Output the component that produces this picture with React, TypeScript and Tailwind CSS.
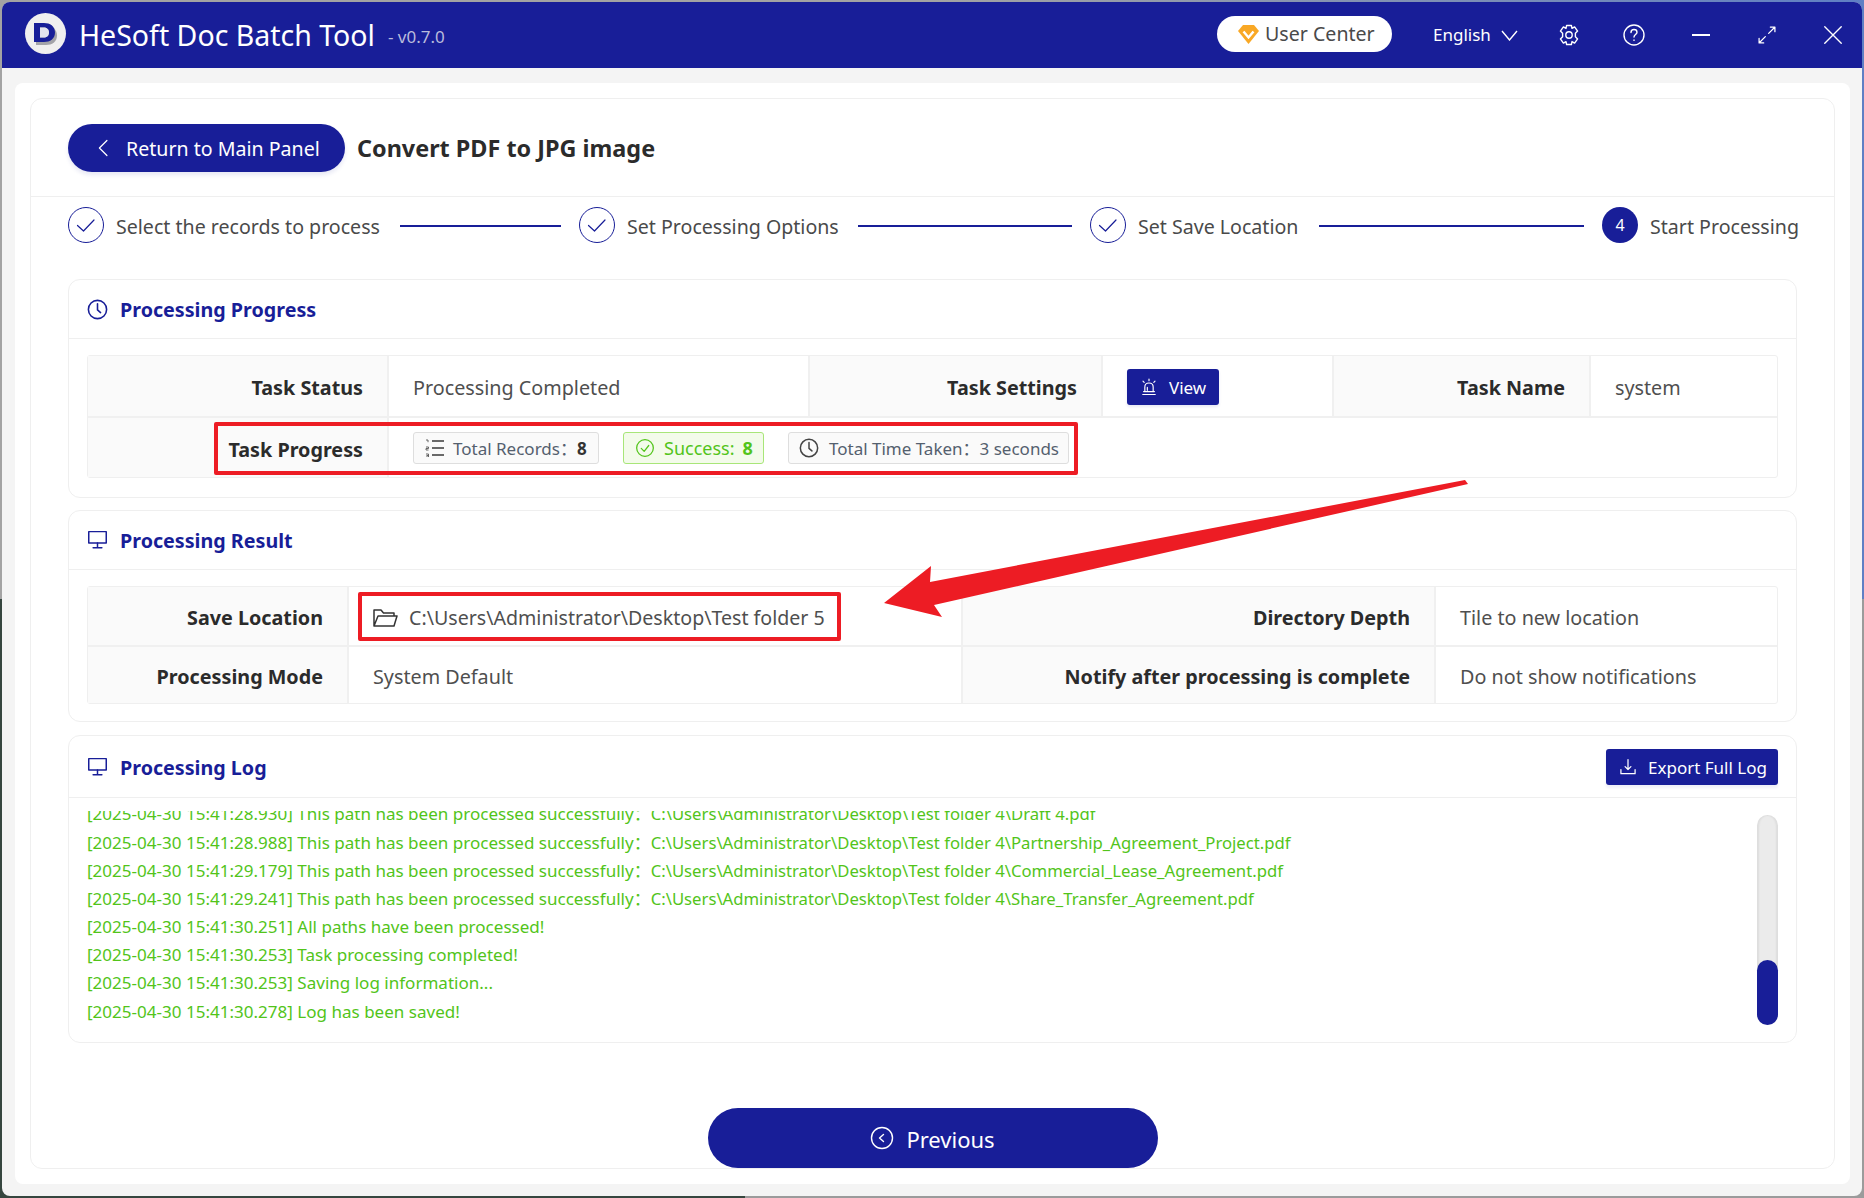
import React from "react";

function Stroke({ size, className, children, sw = 1.5 }: { size: number; className?: string; children: React.ReactNode; sw?: number }) {
  return (
    <svg width={size} height={size} viewBox="0 0 24 24" fill="none" stroke="currentColor" strokeWidth={sw} strokeLinecap="round" strokeLinejoin="round" className={className}>
      {children}
    </svg>
  );
}

const ClockIcon = ({ size = 20, className = "" }: { size?: number; className?: string }) => (
  <Stroke size={size} className={className} sw={1.8}>
    <circle cx="12" cy="12" r="10.4" />
    <path d="M12 5.5V12.5L15.5 15.5" />
  </Stroke>
);

const MonitorIcon = () => (
  <Stroke size={21} className="text-[#181e98] shrink-0" sw={1.7}>
    <path d="M2 3H22V16H2Z" />
    <path d="M12 16V21M7 21.5H17" />
  </Stroke>
);

function Step({ n, label, done, w }: { n: number; label: string; done: boolean; w: string }) {
  return (
    <div className="flex items-center shrink-0">
      {done ? (
        <div className="w-[36px] h-[36px] rounded-full border border-[#181e98] flex items-center justify-center text-[#181e98]">
          <Stroke size={24} sw={1.2}><path d="M3.5 12.5L9.5 18L20 7" /></Stroke>
        </div>
      ) : (
        <div className="w-[36px] h-[36px] rounded-full bg-[#181e98] flex items-center justify-center text-white text-[16px]">{n}</div>
      )}
      <span className={"ml-[12px] mt-[4px] text-[19.6px] text-[#4a4a4a] whitespace-nowrap " + w}>{label}</span>
    </div>
  );
}

const Line = ({ className }: { className: string }) => <div className={"h-[2px] mt-[2px] bg-[#181e98] shrink-0 " + className} />;

const Lbl = ({ className, children }: { className: string; children: React.ReactNode }) => (
  <div className={"shrink-0 bg-[#fafafa] flex items-center justify-end pr-[24px] pt-[4px] font-bold text-[19.75px] text-[#2b2b2b] border-r-2 border-[#f0f0f0] whitespace-nowrap " + className}>{children}</div>
);
const Val = ({ className, children }: { className: string; children: React.ReactNode }) => (
  <div className={"shrink-0 flex items-center pl-[24px] text-[19.75px] text-[#4f4f4f] " + className}>{children}</div>
);

function Tag({ className, children }: { className: string; children: React.ReactNode }) {
  return <div className={"h-[32px] rounded-[3px] border flex items-center shrink-0 whitespace-nowrap " + className}>{children}</div>;
}

function Card({ className, icon, title, right, children, headH }: { className: string; icon: React.ReactNode; title: string; right?: React.ReactNode; children: React.ReactNode; headH: string }) {
  return (
    <section className={"rounded-[12px] border border-[#efefef] flex flex-col " + className}>
      <header className={"flex items-center pl-[18px] pr-[18px] border-b border-[#efefef] shrink-0 " + headH}>
        {icon}
        <h2 className="ml-[12px] mt-[2px] text-[19.7px] font-bold text-[#181e98]">{title}</h2>
        {right}
      </header>
      {children}
    </section>
  );
}

const base = "C:\\Users\\Administrator\\Desktop\\Test folder 4\\";
const ok = "This path has been processed successfully\uff1a";
const logs: { head: string; path?: string }[] = [
  { head: `[2025-04-30 15:41:28.930] ${ok}`, path: base + "Draft 4.pdf" },
  { head: `[2025-04-30 15:41:28.988] ${ok}`, path: base + "Partnership_Agreement_Project.pdf" },
  { head: `[2025-04-30 15:41:29.179] ${ok}`, path: base + "Commercial_Lease_Agreement.pdf" },
  { head: `[2025-04-30 15:41:29.241] ${ok}`, path: base + "Share_Transfer_Agreement.pdf" },
  { head: "[2025-04-30 15:41:30.251] All paths have been processed!" },
  { head: "[2025-04-30 15:41:30.253] Task processing completed!" },
  { head: "[2025-04-30 15:41:30.253] Saving log information..." },
  { head: "[2025-04-30 15:41:30.278] Log has been saved!" },
];

export default function App() {
  return (
    <div className="relative w-[1864px] h-[1198px] overflow-hidden p-[2px] [background:linear-gradient(90deg,#a3a3a3_0,#a3a3a3_50%,#5f7fc4_100%)_top/100%_50%_no-repeat,linear-gradient(90deg,#36463f_745px,#9b9b9b_745px)] font-['Noto_Sans','Open_Sans','Noto_Sans_CJK_SC',sans-serif]">
      <div className="w-[1860px] h-[1194px] rounded-[8px] overflow-hidden bg-[#f4f4f4] flex flex-col">
        {/* title bar */}
        <div className="h-[66px] bg-[#181e98] flex items-center shrink-0 text-white">
          <div className="ml-[23px] mb-[3px] w-[41px] h-[41px] rounded-full bg-[#f0efef] flex items-center justify-center shrink-0">
            <svg width="25" height="23" viewBox="0 0 25 23">
              <path fillRule="evenodd" fill="#a3a3a8" d="M3 4H13C19 4 24 7 24 13.5S19 23 13 23H3Z" />
              <path fillRule="evenodd" fill="#181e98" d="M1 1H11C17 1 22 4 22 10.5S17 20 11 20H1ZM7 5.5V15.5H10.5C14 15.5 16 13.5 16 10.5S14 5.5 10.5 5.5Z" />
              <path fill="#e4e4ee" d="M7 5.5V15.5H10.5C14 15.5 16 13.5 16 10.5S14 5.5 10.5 5.5Z" />
            </svg>
          </div>
          <span className="ml-[13px] text-[28.5px] whitespace-nowrap">HeSoft Doc Batch Tool</span>
          <span className="ml-[13px] text-[17px] mt-[3px] text-[#b9bbdc] whitespace-nowrap">- v0.7.0</span>
          <div className="ml-auto w-[175px] h-[36px] mb-[2px] rounded-full bg-white flex items-center pl-[21px] text-[#4a4a4a] text-[19.6px] shrink-0">
            <svg width="21" height="19" viewBox="0 0 21 19" className="shrink-0"><path fill="#f9a825" d="M5 0H16L21 6L10.5 19L0 6Z" /><path fill="none" stroke="#fff" strokeWidth="2.4" d="M5.5 6.5L10.5 12.5L15.5 6.5" /></svg>
            <span className="ml-[6px] whitespace-nowrap">User Center</span>
          </div>
          <span className="ml-[41px] w-[56px] text-[17px] whitespace-nowrap">English</span>
          <svg width="17" height="11" viewBox="0 0 17 11" className="ml-[12px] shrink-0" fill="none" stroke="currentColor" strokeWidth="1.4"><path d="M1 1L8.5 10L16 1" /></svg>
          <Stroke size={24} className="ml-[39px] shrink-0" sw={1.4}>
            <circle cx="12" cy="12" r="3.2" />
            <path d="M9.6 2.5H14.4L15 5.4L17.6 3.9L20.6 8.1L18.4 10.2V13.8L20.6 15.9L17.6 20.1L15 18.6L14.4 21.5H9.6L9 18.6L6.4 20.1L3.4 15.9L5.6 13.8V10.2L3.4 8.1L6.4 3.9L9 5.4Z" />
          </Stroke>
          <Stroke size={24} className="ml-[41px] shrink-0" sw={1.4}>
            <circle cx="12" cy="12" r="10" />
            <path d="M9 9.5C9 7.5 10.5 6.5 12 6.5C13.7 6.5 15 7.7 15 9.2C15 11.5 12 11.5 12 14" />
            <path d="M12 17V17.4" />
          </Stroke>
          <div className="ml-[46px] w-[18px] h-[2px] bg-white shrink-0" />
          <Stroke size={20} className="ml-[47px] shrink-0" sw={1.5}>
            <path d="M14 10L21 3M16 2.5H21.5V8M10 14L3 21M2.5 16V21.5H8" />
          </Stroke>
          <Stroke size={22} className="ml-[45px] mr-[18px] shrink-0" sw={1.5}>
            <path d="M3 3L21 21M21 3L3 21" />
          </Stroke>
        </div>
        {/* body */}
        <div className="flex-1 pl-[13px] pr-[12px] pt-[15px] pb-[12px] min-h-0">
          <div className="h-full bg-white rounded-[8px] p-[15px]">
            <div className="h-full rounded-[12px] border border-[#efefef] flex flex-col">
              <div className="h-[98px] border-b border-[#efefef] flex items-center pl-[37px] shrink-0">
                <div className="w-[277px] h-[48px] rounded-full bg-[#181e98] text-white flex items-center pl-[26px] text-[19.6px] shadow-[0_3px_4px_rgba(24,30,152,0.1)]">
                  <Stroke size={20} sw={1.5}><path d="M15.5 3L6.5 12L15.5 21" /></Stroke>
                  <span className="ml-[12px] mt-[2px] whitespace-nowrap">Return to Main Panel</span>
                </div>
                <h1 className="ml-[12px] mt-[2px] text-[23.4px] font-bold text-[#2b2b2b] whitespace-nowrap">Convert PDF to JPG image</h1>
              </div>
              <div className="flex items-center mt-[10px] pl-[37px] h-[36px] shrink-0">
                <Step n={1} label="Select the records to process" done w="w-[266px]" />
                <Line className="ml-[18px] w-[161px]" />
                <div className="ml-[18px]"><Step n={2} label="Set Processing Options" done w="w-[213px]" /></div>
                <Line className="ml-[18px] w-[214px]" />
                <div className="ml-[18px]"><Step n={3} label="Set Save Location" done w="w-[163px]" /></div>
                <Line className="ml-[18px] w-[265px]" />
                <div className="ml-[18px]"><Step n={4} label="Start Processing" done={false} w="w-[147px]" /></div>
              </div>

              <div className="mx-[37px] mt-[36px] flex flex-col flex-1 min-h-0">
                <Card className="h-[219px]" headH="h-[59px]" icon={<ClockIcon className="text-[#181e98] shrink-0" size={21} />} title="Processing Progress">
                  <div className="mx-[18px] mt-[16px] h-[123px] border border-[#efefef] rounded-[3px] flex flex-col">
                    <div className="h-[62px] flex border-b-2 border-[#f0f0f0]">
                      <Lbl className="w-[301px]">Task Status</Lbl>
                      <Val className="w-[421px] pt-[4px] border-r-2 border-[#f0f0f0]">Processing Completed</Val>
                      <Lbl className="w-[293px]">Task Settings</Lbl>
                      <Val className="w-[229px]">
                        <div className="w-[92px] h-[36px] mt-[2px] rounded-[3px] bg-[#181e98] text-white text-[17px] flex items-center pl-[12px] shadow-[0_2px_3px_rgba(24,30,152,0.1)]">
                          <Stroke size={20} sw={1.4}>
                            <path d="M7 17.5V12C7 9 9 7.2 12 7.2S17 9 17 12V17.5M4.5 21H19.5M5.5 17.5H18.5M10 16V12.5" />
                            <path d="M12 2.5V4.5M4.8 5L6.2 6.4M19.2 5L17.8 6.4" />
                          </Stroke>
                          <span className="ml-[10px] mt-[2px]">View</span>
                        </div>
                      </Val>
                      <div className="w-[2px] bg-[#f0f0f0] shrink-0" />
                      <Lbl className="w-[257px]">Task Name</Lbl>
                      <Val className="flex-1 pt-[4px]">system</Val>
                    </div>
                    <div className="flex-1 flex">
                      <Lbl className="w-[301px]">Task Progress</Lbl>
                      <div className="flex items-center pl-[24px] gap-[24px]">
                        <Tag className="w-[186px] bg-[#fafafa] border-[#dedede] text-[#54606e] pl-[11px] text-[17px]">
                          <svg width="19" height="18" viewBox="0 0 19 18" fill="none" className="shrink-0">
                            <path d="M7 2H19M7 9H19M7 16H19" stroke="#3a3a3a" strokeWidth="1.6" />
                            <path d="M1 1H3V3.2M1 8H3.5V9.5H1V11H3.5M1 15H3.5V18H1M1.5 16.5H3.5" stroke="#555" strokeWidth="0.9" />
                          </svg>
                          <span className="ml-[9px] mt-[2px]">Total Records{"\uff1a"}</span>
                          <b className="mt-[2px] text-[#333]">8</b>
                        </Tag>
                        <Tag className="w-[141px] bg-[#f3fbea] border-[#a8e678] text-[#52c41a] pl-[11px] text-[18px]">
                          <Stroke size={20} className="shrink-0" sw={1.5}><circle cx="12" cy="12" r="10" /><path d="M7.5 12.5L11 16L16.5 9" /></Stroke>
                          <span className="ml-[9px] mt-[2px]">Success:</span>
                          <b className="ml-[8px] mt-[2px]">8</b>
                        </Tag>
                        <Tag className="w-[281px] bg-[#fafafa] border-[#dedede] text-[#54606e] pl-[10px] text-[17px]">
                          <ClockIcon className="text-[#444] shrink-0" size={20} />
                          <span className="ml-[10px] mt-[2px]">Total Time Taken{"\uff1a"}</span>
                          <span className="mt-[2px]">3 seconds</span>
                        </Tag>
                      </div>
                    </div>
                  </div>
                </Card>

                <Card className="h-[213px] mt-[12px]" headH="h-[59px]" icon={<MonitorIcon />} title="Processing Result">
                  <div className="mx-[18px] mt-[16px] h-[118px] border border-[#efefef] rounded-[3px] flex flex-col">
                    <div className="h-[60px] flex border-b-2 border-[#f0f0f0]">
                      <Lbl className="w-[261px]">Save Location</Lbl>
                      <Val className="w-[614px] pt-[4px] border-r-2 border-[#f0f0f0]">
                        <svg width="25" height="18" viewBox="0 0 25 18" fill="none" stroke="#333" strokeWidth="1.5" strokeLinejoin="round" className="shrink-0">
                          <path d="M1 17V1H8L10.5 4H21V7M1 17H21L24 7H5L1 17Z" />
                        </svg>
                        <span className="ml-[11px] text-[19.6px] whitespace-nowrap">C:\Users\Administrator\Desktop\Test folder 5</span>
                      </Val>
                      <Lbl className="w-[473px]">Directory Depth</Lbl>
                      <Val className="flex-1 pt-[4px]">Tile to new location</Val>
                    </div>
                    <div className="flex-1 flex">
                      <Lbl className="w-[261px]">Processing Mode</Lbl>
                      <Val className="w-[614px] pt-[4px] border-r-2 border-[#f0f0f0]">System Default</Val>
                      <Lbl className="w-[473px]">Notify after processing is complete</Lbl>
                      <Val className="flex-1 pt-[4px]">Do not show notifications</Val>
                    </div>
                  </div>
                </Card>

                <Card
                  className="h-[308px] mt-[13px]"
                  headH="h-[62px]"
                  icon={<MonitorIcon />}
                  title="Processing Log"
                  right={
                    <div className="ml-auto w-[172px] h-[36px] rounded-[3px] bg-[#181e98] text-white text-[17px] flex items-center pl-[12px] shadow-[0_3px_3px_rgba(24,30,152,0.07)]">
                      <Stroke size={20} sw={1.5}><path d="M12 3V15M8.5 11.5L12 15L15.5 11.5M3.5 15V20H20.5V15" /></Stroke>
                      <span className="ml-[10px] mt-[2px] whitespace-nowrap">Export Full Log</span>
                    </div>
                  }
                >
                  <div className="flex flex-1 min-h-0 pl-[18px] pr-[18px]">
                    <div className="flex-1 min-w-0 mt-[13px] h-[216px] overflow-hidden">
                      <div className="-mt-[11px] text-[17.05px] leading-[28.17px] text-[#52c41a]">
                        {logs.map((l, i) => (
                          <div key={i} className="whitespace-nowrap">
                            {l.head}
                            {l.path ? <span className="text-[16.7px]">{l.path}</span> : null}
                          </div>
                        ))}
                      </div>
                    </div>
                    <div className="w-[21px] h-[210px] mt-[17px] rounded-full bg-[#ebebeb] shadow-[inset_2px_0_2px_rgba(0,0,0,0.06),inset_-2px_0_2px_rgba(0,0,0,0.06)] flex flex-col justify-end shrink-0">
                      <div className="h-[65px] rounded-full bg-[#181e98]" />
                    </div>
                  </div>
                </Card>

                <div className="mt-[65px] flex justify-center">
                  <div className="w-[450px] h-[60px] rounded-full bg-[#181e98] text-white flex items-center justify-center text-[22px] shrink-0">
                    <Stroke size={24} sw={1.4}><circle cx="12" cy="12" r="10.5" /><path d="M13.5 8.5L9.5 12L13.5 15.5" /></Stroke>
                    <span className="ml-[12px] mt-[2px]">Previous</span>
                  </div>
                </div>
              </div>
            </div>
          </div>
        </div>
      </div>

      {/* annotations over the screenshot */}
      <div className="absolute left-[214px] top-[422px] w-[864px] h-[53px] border-[4px] border-[#ed1c24] rounded-[2px] pointer-events-none" />
      <div className="absolute left-[358px] top-[592px] w-[483px] h-[49px] border-[4px] border-[#ed1c24] rounded-[2px] pointer-events-none" />
      <svg className="absolute left-0 top-0 pointer-events-none" width="1864" height="1198" viewBox="0 0 1864 1198">
        <path fill="#ed1c24" d="M1465 480L1468 484L934 605L942 617L884 603L931 566L930 582Z" />
      </svg>
    </div>
  );
}
